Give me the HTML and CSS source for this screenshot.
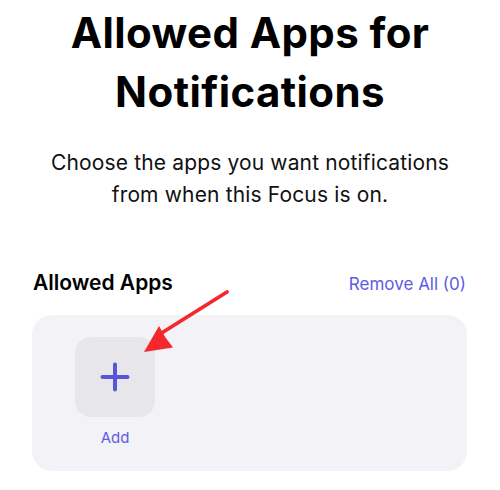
FILE: index.html
```html
<!DOCTYPE html>
<html>
<head>
<meta charset="utf-8">
<link rel="stylesheet" href="styles.css">
</head>
<body>
<div class="page">
  <h1 class="title">Allowed Apps for Notifications</h1>
  <p class="subtitle">Choose the apps you want notifications<br>from when this Focus is on.</p>
  <div class="section-head">
    <h2 class="section-title">Allowed Apps</h2>
    <span class="remove-all">Remove All (0)</span>
  </div>
  <div class="card">
    <div class="add-item">
      <div class="add-tile">
        <svg class="plus" width="30" height="30" viewBox="0 0 30 30">
          <path d="M15 2.5V27.5M2.5 15H27.5" stroke="#5856d6" stroke-width="4" stroke-linecap="round" fill="none"/>
        </svg>
      </div>
      <span class="add-label">Add</span>
    </div>
  </div>
  <svg class="arrow" width="500" height="490" viewBox="0 0 500 490">
    <path d="M227 292L160 334" stroke="#f4282c" stroke-width="3.8" stroke-linecap="round" fill="none"/>
    <path d="M144 352L159 326L165.5 337.5L173 347.5Z" fill="#f4282c"/>
  </svg>
</div>
</body>
</html>
```

FILE: styles.css
```css
html, body {
  margin: 0;
  padding: 0;
  background: #ffffff;
}

.page {
  position: relative;
  width: 500px;
  height: 490px;
  overflow: hidden;
  font-family: "Inter", "Liberation Sans", sans-serif;
  color: #000;
}

.title {
  margin: 3px 30px 0;
  font-size: 42px;
  font-weight: 700;
  line-height: 59px;
  text-align: center;
  letter-spacing: 0.4px;
}

.subtitle {
  margin: 26px 0 0;
  font-size: 21px;
  font-weight: 400;
  line-height: 32px;
  text-align: center;
  letter-spacing: 0.15px;
  color: #111;
}

.section-head {
  display: flex;
  justify-content: space-between;
  align-items: baseline;
  margin: 60px 34px 0 33px;
  line-height: 24px;
}

.section-title {
  margin: 0;
  font-size: 21px;
  font-weight: 600;
}

.remove-all {
  font-size: 17px;
  color: #5e5ce6;
}

.card {
  margin: 19px 33px 0 32px;
  height: 156px;
  box-sizing: border-box;
  padding: 22px 43px;
  background: #f2f2f7;
  border-radius: 20px;
  display: flex;
}

.add-item {
  display: flex;
  flex-direction: column;
  align-items: center;
  gap: 12px;
}

.add-tile {
  width: 80px;
  height: 80px;
  border-radius: 16px;
  background: #e6e6eb;
  display: flex;
  align-items: center;
  justify-content: center;
}

.add-label {
  font-size: 15px;
  line-height: 18px;
  color: #5e5ce6;
}

.arrow {
  position: absolute;
  top: 0;
  left: 0;
}
```
